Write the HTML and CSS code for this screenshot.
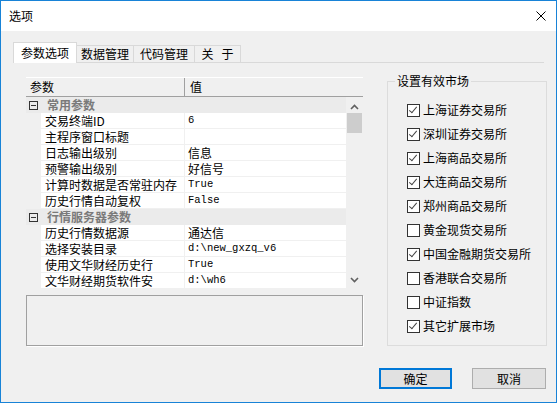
FILE: index.html
```html
<!DOCTYPE html>
<html lang="zh-CN">
<head>
    <meta charset="UTF-8">
    <title>选项</title>
    <link rel="stylesheet" href="styles.css">
</head>
<body>
    <div class="window">
        <div class="titlebar">
            <span class="title">选项</span>
            <svg class="close" width="10" height="10" viewBox="0 0 10 10"><path d="M0.5 0.5L9.5 9.5M9.5 0.5L0.5 9.5" stroke="#000" stroke-width="1"/></svg>
        </div>

        <div class="tabs">
            <div class="tab active">参数选项</div>
            <div class="tab w2">数据管理</div>
            <div class="tab w3">代码管理</div>
            <div class="tab w4">关&nbsp;&nbsp;&nbsp;于</div>
        </div>

        <div class="main">
            <div class="left">
                <div class="grid">
                    <div class="grid-head">
                        <div class="hcell hname">参数</div>
                        <div class="hcell hval">值</div>
                    </div>
                    <div class="grid-body">
                        <div class="rows">
                            <div class="cat"><span class="toggle"></span>常用参数</div>
                            <div class="row"><span class="n">交易终端ID</span><span class="v mono">6</span></div>
                            <div class="row"><span class="n">主程序窗口标题</span><span class="v"></span></div>
                            <div class="row"><span class="n">日志输出级别</span><span class="v">信息</span></div>
                            <div class="row"><span class="n">预警输出级别</span><span class="v">好信号</span></div>
                            <div class="row"><span class="n">计算时数据是否常驻内存</span><span class="v mono">True</span></div>
                            <div class="row"><span class="n">历史行情自动复权</span><span class="v mono">False</span></div>
                            <div class="cat"><span class="toggle"></span>行情服务器参数</div>
                            <div class="row"><span class="n">历史行情数据源</span><span class="v">通达信</span></div>
                            <div class="row"><span class="n">选择安装目录</span><span class="v mono">d:\new_gxzq_v6</span></div>
                            <div class="row"><span class="n">使用文华财经历史行</span><span class="v mono">True</span></div>
                            <div class="row"><span class="n">文华财经期货软件安</span><span class="v mono">d:\wh6</span></div>
                        </div>
                        <div class="vscroll">
                            <svg class="arrow" width="9" height="6" viewBox="0 0 9 6"><path d="M1 5L4.5 1.5L8 5" fill="none" stroke="#606060" stroke-width="1.6"/></svg>
                            <div class="thumb"></div>
                            <div class="track"></div>
                            <svg class="arrow" width="9" height="6" viewBox="0 0 9 6"><path d="M1 1L4.5 4.5L8 1" fill="none" stroke="#606060" stroke-width="1.6"/></svg>
                        </div>
                    </div>
                </div>
                <div class="desc"></div>
            </div>

            <fieldset class="markets">
                <legend>设置有效市场</legend>
                <ul class="checklist">
                    <li><span class="cb on"></span>上海证券交易所</li>
                    <li><span class="cb on"></span>深圳证券交易所</li>
                    <li><span class="cb on"></span>上海商品交易所</li>
                    <li><span class="cb on"></span>大连商品交易所</li>
                    <li><span class="cb on"></span>郑州商品交易所</li>
                    <li><span class="cb"></span>黄金现货交易所</li>
                    <li><span class="cb on"></span>中国金融期货交易所</li>
                    <li><span class="cb"></span>香港联合交易所</li>
                    <li><span class="cb"></span>中证指数</li>
                    <li><span class="cb on"></span>其它扩展市场</li>
                </ul>
            </fieldset>
        </div>

        <div class="footer">
            <button class="btn primary">确定</button>
            <button class="btn">取消</button>
        </div>
    </div>
</body>
</html>
```

FILE: styles.css
```css
body {
    margin: 0;
    padding: 0;
    font-family: "Noto Sans CJK SC", "Noto Sans", sans-serif;
    font-size: 12px;
    color: #000;
}
.window {
    width: 557px;
    height: 403px;
    box-sizing: border-box;
    border: 1px solid #1883d7;
    background-color: #f0f0f0;
}
.titlebar {
    height: 30px;
    background-color: #ffffff;
    display: flex;
    align-items: center;
    padding: 0 10px 0 8px;
}
.title {
    line-height: 16px;
}
.close {
    margin-left: auto;
}

/* tab strip */
.tabs {
    display: flex;
    align-items: flex-end;
    margin: 11px 12px 0 12px;
    height: 20px;
    border-bottom: 1px solid #d9d9d9;
}
.tab {
    height: 16px;
    line-height: 16px;
    border: 1px solid #d9d9d9;
    border-bottom: none;
    text-align: center;
    box-sizing: content-box;
}
.tab.active {
    width: 62px;
    height: 20px;
    line-height: 20px;
    background-color: #ffffff;
    margin-bottom: -1px;
    position: relative;
}
.tab.w2 { width: 56px; border-left: none; }
.tab.w3 { width: 60px; border-left: none; }
.tab.w4 { width: 45px; border-left: none; }

.main {
    display: flex;
    align-items: flex-start;
    padding-left: 25px;
    margin-top: 10px;
}
.left {
    width: 337px;
    margin-top: 4px;
}

/* property grid */
.grid {
    height: 212px;
    overflow: hidden;
}
.grid-head {
    display: flex;
    height: 18px;
    border-top: 1px solid #ffffff;
    border-bottom: 1px solid #a0a0a0;
    line-height: 18px;
}
.hcell {
    padding-left: 4px;
    box-sizing: border-box;
}
.hname {
    width: 159px;
    border-right: 1px solid #a0a0a0;
}
.hval {
    padding-left: 5px;
}
.grid-body {
    display: flex;
}
.rows {
    width: 320px;
}
.cat {
    height: 16px;
    line-height: 16px;
    background-color: #ebebeb;
    font-weight: bold;
    color: #7a7a7a;
    display: flex;
    align-items: center;
}
.toggle {
    width: 7px;
    height: 7px;
    border: 1px solid #333;
    margin: 0 9px 0 3px;
    position: relative;
}
.toggle::after {
    content: "";
    position: absolute;
    left: 1px;
    right: 1px;
    top: 3px;
    height: 1px;
    background-color: #333;
}
.row {
    display: flex;
    gap: 1px;
    height: 15px;
    padding: 0 0 1px 15px;
    line-height: 15px;
}
.n, .v {
    background-color: #ffffff;
    white-space: nowrap;
    overflow: hidden;
}
.n {
    width: 139px;
    padding-left: 4px;
}
.v {
    width: 158px;
    padding-left: 3px;
}
.mono {
    font-family: "Liberation Mono", "DejaVu Sans Mono", monospace;
    font-size: 10.5px;
}
.vscroll {
    width: 17px;
    height: 192px;
    display: flex;
    flex-direction: column;
    align-items: center;
}
.arrow {
    margin: 7px 0 3px 0;
    flex: none;
}
.vscroll .arrow:last-child {
    margin: 0 0 6px 0;
}
.thumb {
    width: 15px;
    height: 20px;
    background-color: #cdcdcd;
    flex: none;
}
.track {
    flex: 1;
}
.desc {
    margin-top: 6px;
    height: 49px;
    border: 1px solid #a0a0a0;
    box-shadow: 1px 1px 0 #ffffff;
}

/* market group box */
.markets {
    width: 160px;
    height: 273px;
    box-sizing: border-box;
    margin: 0 0 0 24px;
    padding: 0;
    border: 1px solid #dcdcdc;
}
.markets legend {
    margin-left: 7px;
    padding: 0 2px;
    line-height: 16px;
}
.checklist {
    list-style: none;
    margin: 9px 0 0 0;
    padding: 0 0 0 19px;
}
.checklist li {
    height: 24px;
    display: flex;
    align-items: center;
    line-height: 16px;
}
.cb {
    width: 11px;
    height: 11px;
    border: 1px solid #333;
    background-color: #ffffff;
    margin-right: 3px;
    position: relative;
    flex: none;
}
.cb.on::after {
    content: "";
    position: absolute;
    left: 3px;
    top: 0px;
    width: 3px;
    height: 7px;
    border-right: 1px solid #444;
    border-bottom: 1px solid #444;
    transform: rotate(40deg);
}

.footer {
    display: flex;
    justify-content: flex-end;
    gap: 20px;
    padding-right: 10px;
    margin-top: 22px;
}
.btn {
    font-family: "Noto Sans CJK SC", "Noto Sans", sans-serif;
    font-size: 12px;
    width: 74px;
    height: 21px;
    padding: 0;
    background-color: #e1e1e1;
    border: 1px solid #adadad;
    color: #000;
}
.btn.primary {
    width: 73px;
    border: 2px solid #0078d7;
}
```
